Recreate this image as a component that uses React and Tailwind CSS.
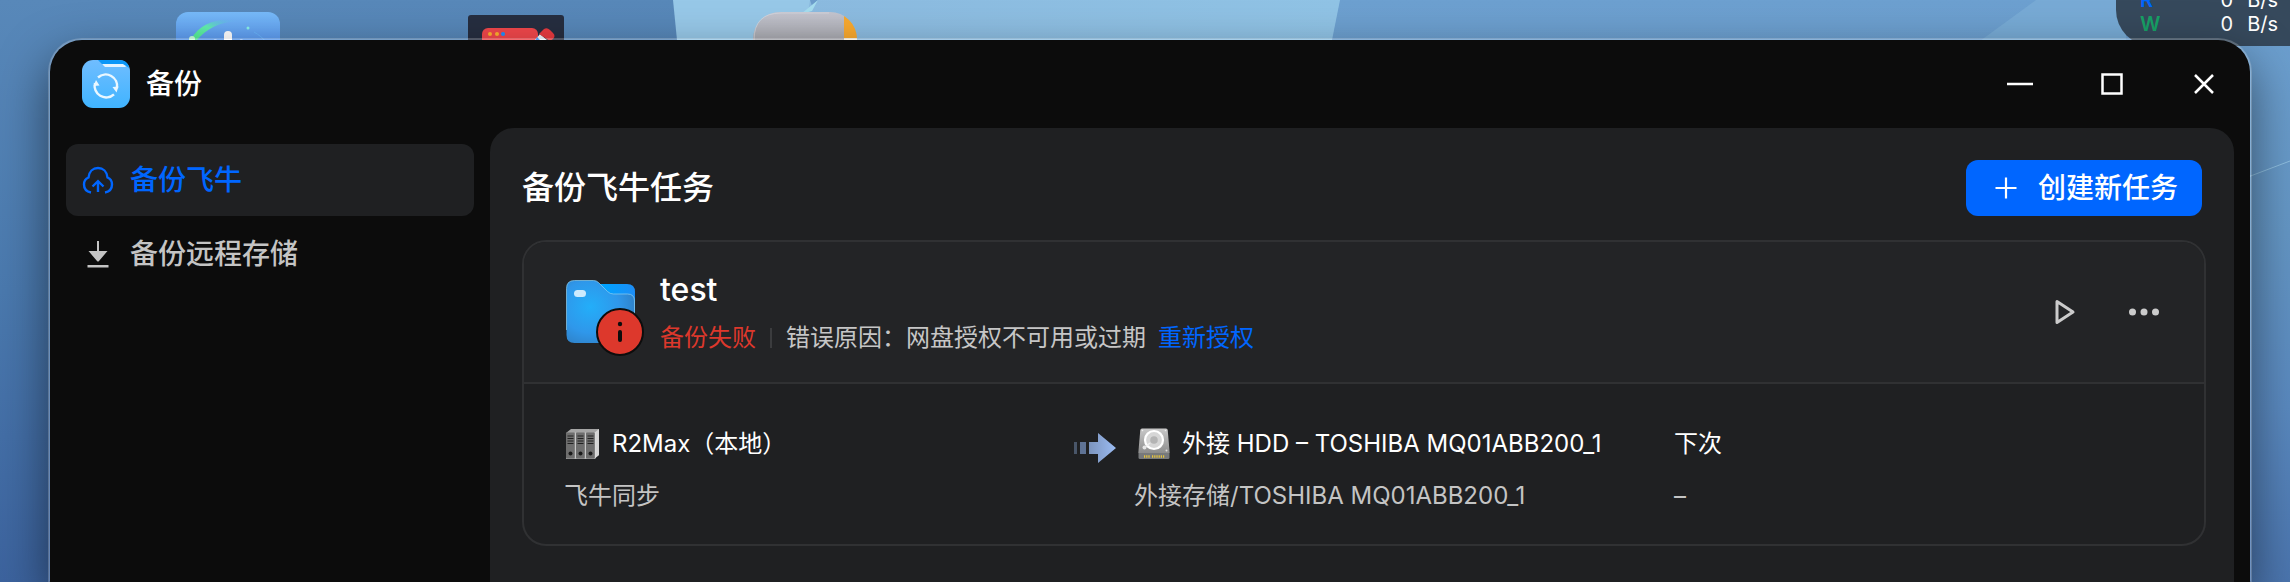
import React, { useState } from 'react';

const Wallpaper = () => (
  <svg className="absolute inset-0 h-full w-full" viewBox="0 0 2290 582" preserveAspectRatio="none" aria-hidden="true">
    <defs>
      <linearGradient id="wallLeft" x1="0" y1="0" x2="0" y2="1">
        <stop offset="0" stopColor="#5888b9" />
        <stop offset="0.5" stopColor="#4a79ae" />
        <stop offset="1" stopColor="#3c639e" />
      </linearGradient>
      <linearGradient id="wallRight" x1="0" y1="0" x2="0" y2="1">
        <stop offset="0" stopColor="#6da0d0" />
        <stop offset="0.4" stopColor="#6496c4" />
        <stop offset="0.7" stopColor="#5a89bf" />
        <stop offset="1" stopColor="#4b75ae" />
      </linearGradient>
      <linearGradient id="wallMid" x1="0" y1="0" x2="1" y2="0">
        <stop offset="0" stopColor="#8bbadf" />
        <stop offset="1" stopColor="#90c3e5" />
      </linearGradient>
    </defs>
    <path d="M0 0h700v582H0z" fill="url(#wallLeft)" />
    <path d="M1330 0h960v582h-960z" fill="url(#wallRight)" />
    <path d="M673 0h140l6 60H679z" fill="#97c8e8" />
    <path d="M810 0h530l-12 60H800z" fill="url(#wallMid)" />
    <path d="M810 0h8l-6 6z" fill="#6c9ccb" />
    <path d="M818 0l-17 14 11-3z" fill="#a5dcee" />
    <path d="M2036 0h90v60H1954z" fill="#7aacd6" opacity="0.8" />
    <path d="M2240 180l50-19" stroke="#8fbfe0" strokeWidth="1" />
  </svg>
);

const AssistantIcon = () => (
  <svg width="104" height="104" viewBox="0 0 104 104" aria-hidden="true">
    <defs>
      <linearGradient id="assistBg" x1="0" y1="0" x2="0" y2="0.4">
        <stop offset="0" stopColor="#77baf9" />
        <stop offset="1" stopColor="#4e8bea" />
      </linearGradient>
      <linearGradient id="assistArc" x1="0" y1="1" x2="1" y2="0">
        <stop offset="0" stopColor="#4fee8c" />
        <stop offset="0.5" stopColor="#62f0b0" />
        <stop offset="1" stopColor="#5fb0fa" stopOpacity="0" />
      </linearGradient>
    </defs>
    <rect width="104" height="104" rx="12" fill="url(#assistBg)" />
    <path d="M15 27C25 11 42 5 62 9 44 10 31 16 20 29z" fill="url(#assistArc)" />
    <circle cx="16" cy="27" r="3" fill="#c8ffdc" />
    <circle cx="72" cy="16" r="1.5" fill="#8af3e8" />
    <path d="M78 20c5 3 9 6 12 10" fill="none" stroke="#69b4fb" strokeWidth="1" />
    <rect x="48" y="19" width="8" height="20" rx="4" fill="#fff" />
    <path d="M36 29c2-2 5-2 6 0zM62 29c2-2 5-2 6 0z" fill="#d6e8ff" />
  </svg>
);

const ToolboxIcon = () => (
  <svg width="96" height="96" viewBox="0 0 96 96" aria-hidden="true">
    <rect width="96" height="96" rx="3" fill="#262e40" />
    <rect x="14" y="13" width="56" height="40" rx="6" fill="#f0474b" />
    <circle cx="22" cy="19" r="2" fill="#ffb02e" />
    <circle cx="29" cy="19" r="2" fill="#ffb02e" />
    <circle cx="35" cy="19" r="2" fill="#1e90ff" />
    <path d="M66 26l6-7 8 7z" fill="#f2f4fa" />
    <path d="M67 26l2-4 4 4z" fill="#2a86f0" />
    <path d="M71 19l5-5q3-2 6 1l3 3q3 3 0 6l-3 2z" fill="#e83a3f" />
  </svg>
);

const NotesIcon = () => (
  <svg width="104" height="104" viewBox="0 0 104 104" aria-hidden="true">
    <defs>
      <linearGradient id="noteGrey" x1="0" y1="0" x2="0" y2="0.3">
        <stop offset="0" stopColor="#c4c5cf" />
        <stop offset="1" stopColor="#a4a5ab" />
      </linearGradient>
      <clipPath id="noteClip"><rect width="104" height="104" rx="27" /></clipPath>
    </defs>
    <g clipPath="url(#noteClip)">
      <path d="M0 0h92v104H0z" fill="url(#noteGrey)" />
      <path d="M91 0h13v27H91z" fill="#f9a92f" />
      <path d="M91 26h13v20H91z" fill="#f4ead8" />
    </g>
    <path d="M1 28Q1 1 28 1h48" fill="none" stroke="#d8d9e0" strokeWidth="1" opacity="0.7" />
  </svg>
);

const BackupAppIcon = () => (
  <svg width="48" height="48" viewBox="0 0 48 48" aria-hidden="true">
    <defs>
      <linearGradient id="appBg" x1="0" y1="0" x2="0" y2="1">
        <stop offset="0" stopColor="#70bdff" />
        <stop offset="1" stopColor="#40b4ff" />
      </linearGradient>
    </defs>
    <rect width="48" height="48" rx="11" fill="url(#appBg)" />
    <path d="M16 0h21q9 0 10 8L43 5H21z" fill="#0c97f8" />
    <path d="M20 4h21q2 1 3 3H23z" fill="#e4f3ff" />
    <g fill="none" stroke="#eaf7ff" strokeWidth="2.4">
      <path d="M16 17.5A11.5 11.5 0 0 1 35 28" />
      <path d="M32 34.3A11.5 11.5 0 0 1 13 23" />
    </g>
    <path d="M30.5 27l6-.5-2 6zM17.5 25.5l-6 .5 2.5-6z" fill="#eaf7ff" />
  </svg>
);

const CloudUpIcon = () => (
  <svg width="32" height="32" viewBox="0 0 32 32" fill="none" stroke="currentColor" strokeWidth="2.4" aria-hidden="true">
    <path d="M9 28.5C4 27.5 2 24 2 20.5 2 17 4 14.5 6.5 13.5 7 7.5 11 4 16 4s9 3.5 9.5 9.5C28 14.5 30 17 30 20.5c0 3.5-2 7-7 8" />
    <path d="M16 28V17.5M10.5 22.5L16 17.2l5.5 5.3" />
  </svg>
);

const DownloadIcon = () => (
  <svg width="32" height="32" viewBox="0 0 32 32" fill="currentColor" aria-hidden="true">
    <path d="M15 3h2v10h8.5L17 23q-1 1-2 0L6.5 13H15z" />
    <path d="M5.5 27h21v2.5h-21z" />
  </svg>
);

const FolderIcon = () => (
  <svg width="72" height="72" viewBox="0 0 72 72" aria-hidden="true">
    <defs>
      <linearGradient id="folderBack" x1="0" y1="0" x2="1" y2="0">
        <stop offset="0.4" stopColor="#00a2ff" />
        <stop offset="1" stopColor="#1e8df5" />
      </linearGradient>
      <radialGradient id="folderFront" cx="0.35" cy="0.42" r="0.7">
        <stop offset="0" stopColor="#23aef9" />
        <stop offset="0.6" stopColor="#2f97ea" />
        <stop offset="1" stopColor="#2f7fc4" />
      </radialGradient>
    </defs>
    <path d="M20 8h43q8 0 8 8v24H20z" fill="url(#folderBack)" />
    <path d="M2.5 12.5q0-8 8-8h19q3 0 5 2l9 9q2.5 2.5 6 2.5h14q7 0 7 7v34q0 8-8 8h-52q-8 0-8-8z" fill="url(#folderFront)" />
    <path d="M2.5 54V12.5q0-8 8-8h19q3 0 5 2l9 9q2.5 2.5 6 2.5h14q7 0 7 7v20" fill="none" stroke="#8fd0ef" strokeOpacity="0.7" />
    <rect x="10" y="14" width="12" height="7" rx="3.5" fill="#cdeafd" />
  </svg>
);

const ErrorBadge = () => (
  <svg className="absolute top-8 left-8" width="48" height="48" viewBox="0 0 48 48" aria-hidden="true">
    <circle cx="24" cy="24" r="23" fill="#dd382c" stroke="#0d0d0d" strokeWidth="2" />
    <circle cx="24" cy="16" r="2.2" fill="#0d0d0d" />
    <rect x="22" y="22" width="4" height="12" rx="2" fill="#0d0d0d" />
  </svg>
);

const ServerIcon = () => (
  <svg width="36" height="32" viewBox="0 0 36 32" aria-hidden="true">
    <path d="M2 5l5-4h28v26l-5 4H2z" fill="#a5a5a5" />
    <path d="M30 5l5-4v26l-5 4z" fill="#d5d5d5" />
    {[2, 12, 22].map((x) => (
      <g key={x} transform={`translate(${x} 0)`}>
        <rect y="4.5" width="9" height="26" rx="1" fill="#6e6e6e" />
        <path d="M9.3 4.5v26" stroke="#dcdcdc" strokeWidth="0.8" />
        <path d="M1.5 8h6M1.5 10.5h6M1.5 13h6M1.5 15.5h6" stroke="#222" strokeWidth="1.2" />
        <circle cx="4.5" cy="25.5" r="2" fill="#1b1b1b" />
      </g>
    ))}
  </svg>
);

const DiskIcon = () => (
  <svg width="32" height="32" viewBox="0 0 32 32" aria-hidden="true">
    <defs>
      <linearGradient id="diskBody" x1="0" y1="0" x2="0" y2="1">
        <stop offset="0" stopColor="#c9c9c9" />
        <stop offset="1" stopColor="#8d8d8d" />
      </linearGradient>
    </defs>
    <path d="M4 .5h24q1.500 0 1.700 1.500l2 23H.3L2.300 2Q2.500.500 4 .5z" fill="url(#diskBody)" />
    <path d="M.5 25h31v4.500q0 1.500-1.500 1.500H2Q.5 31 .5 29.500z" fill="#77797b" />
    <path d="M6 28.500h6M14 28.500h13" stroke="#e6c43c" strokeWidth="2.6" strokeDasharray="1.2 1" />
    <circle cx="16" cy="12" r="9" fill="#d6d6d6" stroke="#fff" strokeWidth="2.2" />
    <circle cx="16" cy="12" r="3.8" fill="#b4b4b4" />
    <path d="M6 20l6-5" stroke="#f0f0f0" strokeWidth="1.5" />
    <circle cx="6.5" cy="19.5" r="2" fill="#e5e5e5" />
    <circle cx="4.5" cy="2.5" r="0.8" fill="#eee" />
    <circle cx="27.5" cy="2.5" r="0.8" fill="#eee" />
    <circle cx="28.5" cy="22.5" r="1" fill="#ddd" />
  </svg>
);

const ArrowIcon = () => (
  <svg width="44" height="32" viewBox="0 0 44 32" aria-hidden="true">
    <defs>
      <linearGradient id="arrowFill" x1="0" y1="0" x2="1" y2="0">
        <stop offset="0" stopColor="#7c94bd" />
        <stop offset="1" stopColor="#9bbcf3" />
      </linearGradient>
    </defs>
    <path d="M2 10h3v12H2z" fill="#495669" />
    <path d="M8 10h6v12H8z" fill="#5f7395" />
    <path d="M17 10h9V1l18 15-18 15v-9h-9z" fill="url(#arrowFill)" />
  </svg>
);

const menuItems = [
  { name: '备份飞牛', icon: <CloudUpIcon /> },
  { name: '备份远程存储', icon: <DownloadIcon /> },
];

const Sidebar = () => {
  const [active, setActive] = useState('备份飞牛');

  return (
    <nav className="w-[440px] shrink-0 px-4 pt-4">
      <ul className="flex flex-col gap-[2px]">
        {menuItems.map((item) => (
          <li key={item.name}>
            <button
              type="button"
              onClick={() => setActive(item.name)}
              className={`flex h-[72px] w-full items-center gap-4 rounded-xl px-4 text-[28px] font-medium ${
                active === item.name ? 'bg-[#1f2022] text-[#0066ff]' : 'text-[#c4c4c4]'
              }`}
            >
              {item.icon}
              <span>{item.name}</span>
            </button>
          </li>
        ))}
      </ul>
    </nav>
  );
};

const TitleBar = () => (
  <header className="flex h-[88px] items-center justify-between pr-[14px] pl-8">
    <div className="flex items-center gap-4">
      <BackupAppIcon />
      <h1 className="text-[28px] font-medium text-white">备份</h1>
    </div>
    <div className="flex items-center gap-7 text-white">
      <button type="button" aria-label="最小化" className="flex size-16 items-center justify-center">
        <svg width="32" height="32" viewBox="0 0 32 32"><path d="M3 16h26" stroke="currentColor" strokeWidth="2.5" /></svg>
      </button>
      <button type="button" aria-label="最大化" className="flex size-16 items-center justify-center">
        <svg width="32" height="32" viewBox="0 0 32 32"><rect x="6.5" y="6.5" width="19" height="19" fill="none" stroke="currentColor" strokeWidth="2.5" /></svg>
      </button>
      <button type="button" aria-label="关闭" className="flex size-16 items-center justify-center">
        <svg width="32" height="32" viewBox="0 0 32 32"><path d="M7 7l18 18M25 7L7 25" stroke="currentColor" strokeWidth="2.5" /></svg>
      </button>
    </div>
  </header>
);

const TaskCard = () => (
  <article className="mr-7 overflow-hidden rounded-3xl border-2 border-[#303133]">
    <div className="flex h-[142px] items-center gap-6 border-b-2 border-[#303133] bg-[#232426] pr-7 pl-10">
      <div className="relative size-[72px] shrink-0">
        <FolderIcon />
        <ErrorBadge />
      </div>
      <div className="flex grow flex-col gap-2 pt-1">
        <h3 className="text-[32px] leading-10 font-medium text-white">test</h3>
        <div className="flex items-center text-2xl leading-10 text-[#c6c6c6]">
          <span className="text-[#dd382c]">备份失败</span>
          <span className="mx-[14px] h-5 w-[2px] bg-[#3b3c3e]" />
          <span>错误原因：网盘授权不可用或过期</span>
          <a href="#auth" className="ml-3 text-[#0066ff]">重新授权</a>
        </div>
      </div>
      <div className="flex items-center gap-4 text-[#cbcbcb]">
        <button type="button" aria-label="开始" className="flex size-16 items-center justify-center">
          <svg width="32" height="32" viewBox="0 0 32 32"><path d="M9 5.5v21l16-10.500z" fill="none" stroke="currentColor" strokeWidth="3" strokeLinejoin="round" /></svg>
        </button>
        <button type="button" aria-label="更多" className="flex size-16 items-center justify-center">
          <svg width="32" height="32" viewBox="0 0 32 32" fill="currentColor">
            <circle cx="4.5" cy="16" r="3.5" />
            <circle cx="16" cy="16" r="3.5" />
            <circle cx="27.5" cy="16" r="3.5" />
          </svg>
        </button>
      </div>
    </div>
    <div className="grid grid-cols-[508fr_62fr_540fr_490fr] px-10 pt-10 pb-7 text-2xl leading-10 text-[#c4c4c4]">
      <div className="flex flex-col gap-3">
        <p className="flex items-center gap-3 text-white"><ServerIcon />R2Max（本地）</p>
        <p>飞牛同步</p>
      </div>
      <div className="flex h-12 items-center"><ArrowIcon /></div>
      <div className="flex flex-col gap-3">
        <p className="flex items-center gap-3 pl-1 text-white"><DiskIcon />外接 HDD – TOSHIBA MQ01ABB200_1</p>
        <p>外接存储/TOSHIBA MQ01ABB200_1</p>
      </div>
      <div className="flex flex-col gap-3">
        <p className="text-white">下次</p>
        <p>–</p>
      </div>
    </div>
  </article>
);

const speeds = [
  { label: 'R', color: 'text-[#0066ff]', value: '0' },
  { label: 'W', color: 'text-[#16a065]', value: '0' },
];

export default function App() {
  return (
    <div className="relative flex h-screen flex-col overflow-hidden bg-[#5686b8] pt-[38px] pr-[38px] pl-12 font-[Inter,'Noto_Sans_CJK_SC',sans-serif]">
      <Wallpaper />
      <div className="absolute top-3 left-[176px]"><AssistantIcon /></div>
      <div className="absolute top-[15px] left-[468px]"><ToolboxIcon /></div>
      <div className="absolute top-3 left-[753px]"><NotesIcon /></div>

      {/* Disk speed widget */}
      <div className="absolute -top-10 right-0 flex h-[86px] w-[174px] flex-col justify-end rounded-bl-[36px] bg-[#36495c] pr-3 pb-[10px] pl-6 text-xl leading-6 text-white">
        {speeds.map((s) => (
          <div key={s.label} className="flex">
            <span className={`grow font-semibold ${s.color}`}>{s.label}</span>
            <span className="mr-[14px]">{s.value}</span>
            <span>B/s</span>
          </div>
        ))}
      </div>

      <div className="relative flex grow flex-col rounded-t-[34px] border-2 border-b-0 border-white/20 bg-[#0c0c0c] bg-clip-padding shadow-[0_20px_48px_rgba(0,0,0,0.5)]">
        <TitleBar />
        <div className="flex grow pr-4">
          <Sidebar />
          <main className="grow rounded-t-3xl bg-[#1f2022] pt-8 pl-8">
            <div className="mr-8 mb-6 flex items-center justify-between">
              <h2 className="text-[32px] leading-[56px] font-medium text-white">备份飞牛任务</h2>
              <button type="button" className="flex h-14 items-center gap-4 rounded-xl bg-[#0066ff] px-6 text-[28px] font-medium text-white">
                <svg width="32" height="32" viewBox="0 0 32 32"><path d="M16 5.5v21M5.5 16h21" stroke="currentColor" strokeWidth="2.2" /></svg>
                创建新任务
              </button>
            </div>
            <TaskCard />
          </main>
        </div>
      </div>
    </div>
  );
}
